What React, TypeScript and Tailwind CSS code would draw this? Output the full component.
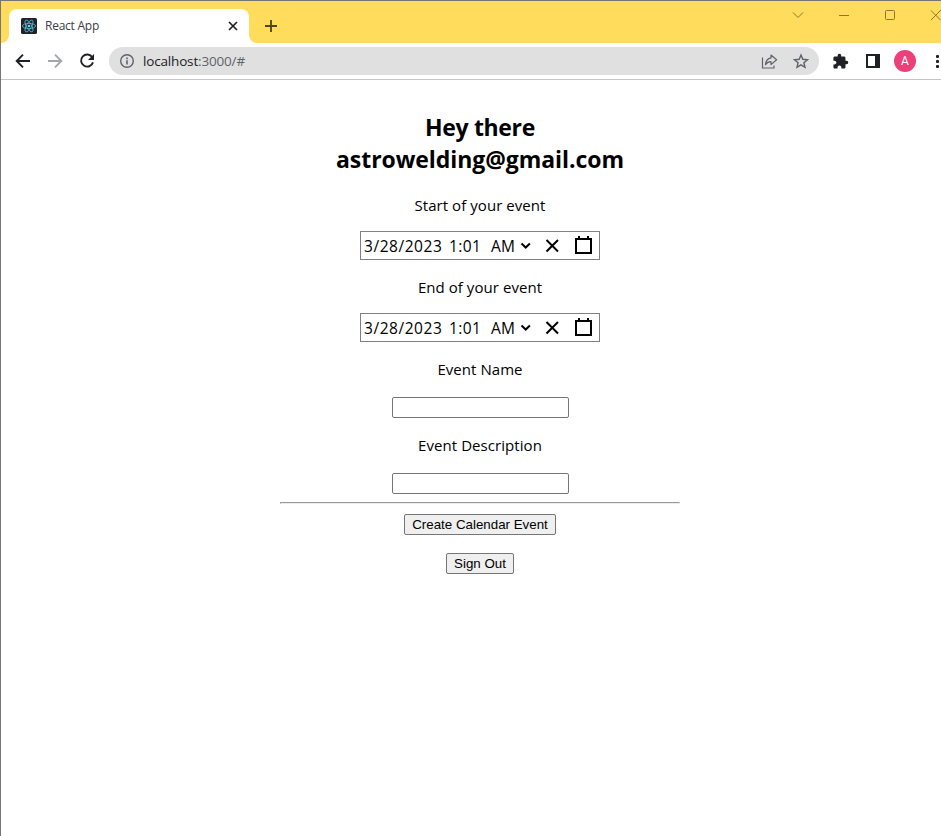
import React from 'react';

const uiFont = "font-['Open_Sans','Noto_Sans',sans-serif]";

function ReactLogo() {
  return (
    <svg className="size-4 shrink-0" viewBox="0 0 16 16">
      <rect width="16" height="16" rx="1.5" fill="#20232a" />
      <g fill="none" stroke="#53b6d0" strokeWidth="0.85">
        <ellipse cx="8" cy="8" rx="6.6" ry="2.6" />
        <ellipse cx="8" cy="8" rx="6.6" ry="2.6" transform="rotate(60 8 8)" />
        <ellipse cx="8" cy="8" rx="6.6" ry="2.6" transform="rotate(120 8 8)" />
      </g>
      <circle cx="8" cy="8" r="1.3" fill="#61dafb" />
    </svg>
  );
}

function TabStrip() {
  return (
    <div className="flex h-[42px] bg-[#ffdc5c]">
      <div className="flex w-2 items-end bg-[#ffdc5c]">
        <svg className="h-2 w-2" viewBox="0 0 8 8"><path d="M8 0v8H0a8 8 0 0 0 8-8z" fill="#fff" /></svg>
      </div>
      <div className="mt-2 flex h-[34px] w-60 items-center rounded-t-lg bg-white pl-3 pr-2.5">
        <ReactLogo />
        <span className={`${uiFont} ml-2 flex-1 text-[12px] leading-4 tracking-[-0.25px] text-[#3c4043]`}>React App</span>
        <svg className="h-3 w-3" viewBox="0 0 12 12"><path d="M2 2l8 8M10 2l-8 8" stroke="#202124" strokeWidth="1.7" /></svg>
      </div>
      <div className="flex w-2 items-end">
        <svg className="h-2 w-2" viewBox="0 0 8 8"><path d="M0 0v8h8a8 8 0 0 1-8-8z" fill="#fff" /></svg>
      </div>
      <svg className="ml-2 mt-[19px] h-3 w-3" viewBox="0 0 12 12"><path d="M6 0v12M0 6h12" stroke="#4d431f" strokeWidth="1.8" /></svg>
      <div className="flex-1" />
      <svg className="h-7 w-[150px]" viewBox="791 1 150 28" fill="none" stroke="#8a7732">
        <path d="M793 12.5l5 5 5-5" />
        <path d="M839 15.5h10" />
        <rect x="885.5" y="10.5" width="9" height="9" rx="1" />
        <path d="M931 10.5l10 10M931 20l10-10" />
      </svg>
    </div>
  );
}

function Toolbar() {
  return (
    <div className="flex h-[37px] items-center border-b border-[#c6c6c6] bg-white">
      <svg className="h-9 w-[108px] shrink-0" viewBox="1 43 108 36" fill="none" strokeWidth="1.9">
        <path d="M30 61H17M23 54.7L16.7 61l6.3 6.3" stroke="#202124" />
        <path d="M48 61h13M55 54.7l6.3 6.3-6.3 6.3" stroke="#a5a6a8" />
        <path d="M92.3 57.2A6.1 6.1 0 1 0 93 62.4" stroke="#202124" />
        <path d="M94 54v6h-6z" fill="#202124" />
      </svg>
      <div className="flex h-7 w-[710px] shrink-0 items-center rounded-full bg-[#e0e0e0] pl-[11px]">
        <svg className="h-[14px] w-[14px]" viewBox="0 0 14 14" fill="none" stroke="#5f6368">
          <circle cx="7" cy="7" r="6.3" strokeWidth="1.4" />
          <path d="M7 6.2v4.2M7 3.6v1.6" strokeWidth="1.6" />
        </svg>
        <span className={`${uiFont} ml-[9px] flex-1 text-[13.5px] leading-5 tracking-[-0.17px] text-[#5f6368]`}>
          <span className="text-[#202124]">localhost</span>:3000/#
        </span>
        <svg className="h-7 w-[60px]" viewBox="759 47 60 28" fill="none" stroke="#5f6368" strokeWidth="1.2">
          <path d="M762.5 57.5v10.500h11.500v-2.5" />
          <path d="M771 55l5.6 4.8-5.6 4.8v-2.9c-2.5 0-4.2.9-5.5 3 .3-3.8 2.1-6.2 5.5-6.8z" strokeLinejoin="round" />
          <path d="M801 55l1.8 4.3 4.7.4-3.6 3 1.1 4.6-4-2.5-4 2.5 1.1-4.6-3.6-3 4.7-.4z" strokeWidth="1.4" />
        </svg>
      </div>
      <svg className="ml-[13px] size-[17px] shrink-0" viewBox="0 0 24 24" fill="#202124">
        <path d="M20.5 11H19V7c0-1.1-.9-2-2-2h-4V3.5a2.5 2.5 0 0 0-5 0V5H4c-1.1 0-2 .9-2 2v3.8h1.5c1.5 0 2.7 1.2 2.7 2.7S5 16.2 3.5 16.2H2V20c0 1.1.9 2 2 2h3.8v-1.5c0-1.5 1.2-2.7 2.7-2.7s2.7 1.2 2.7 2.7V22H17c1.1 0 2-.9 2-2v-4h1.5a2.5 2.5 0 0 0 0-5z" />
      </svg>
      <div className="ml-[17px] h-[14px] w-[14px] shrink-0 border-2 border-r-[5px] border-[#202124]" />
      <div className="ml-[14px] flex size-[22px] shrink-0 items-center justify-center rounded-full bg-[#ec407a] font-[Roboto,sans-serif] text-[12px] text-white">A</div>
      <svg className="ml-[18px] h-4 w-[6px] shrink-0" viewBox="0 0 6 16" fill="#202124">
        <rect x="2" y="2" width="3" height="3" rx="1" /><rect x="2" y="7" width="3" height="3" rx="1" /><rect x="2" y="12" width="3" height="3" rx="1" />
      </svg>
    </div>
  );
}

function Label({ children }: { children: React.ReactNode }) {
  return <p className="h-[22px] whitespace-nowrap text-[15px] leading-[22px] tracking-[0.06px]">{children}</p>;
}

function DateTimePicker() {
  return (
    <div className="flex h-[29px] w-60 items-center border border-[#808080] pl-[3px] text-[15.5px]">
      <span className="w-[85px] whitespace-nowrap pt-0.5 leading-[21px] tracking-[0.55px]">3/28/2023</span>
      <span className="w-[42px] whitespace-nowrap pt-0.5 leading-[21px] tracking-[0.4px]">1:01</span>
      <span className="w-[29px] whitespace-nowrap pt-0.5 leading-[21px] tracking-[0.3px]">AM</span>
      <svg className="h-[27px] w-[76px]" viewBox="520 232 76 27" fill="none" stroke="#000">
        <path d="M521.5 243.5l4.2 4 4.2-4" strokeWidth="2" />
        <path d="M546.5 240l11.5 11.5M558 240l-11.5 11.5" strokeWidth="2" />
        <path d="M576 239h15v14h-15zM579 236v4M588 236v4" strokeWidth="2" />
      </svg>
    </div>
  );
}

function Field() {
  return <input className="h-[21px] w-[177px] rounded-[2px] border border-[#767676] bg-white px-1 outline-none" />;
}

function Button({ children, className }: { children: React.ReactNode; className: string }) {
  return (
    <button className={`${className} h-[21px] whitespace-nowrap rounded-[2px] border border-[#767676] bg-[#efefef] font-['Liberation_Sans',Arial,sans-serif] text-[13.333px] leading-[19px]`}>
      {children}
    </button>
  );
}

export default function App() {
  return (
    <div className="h-[836px] w-[941px] overflow-hidden border-l border-t border-[#757575] bg-white">
      <TabStrip />
      <Toolbar />
      <main className={`${uiFont} ml-[279px] flex w-[400px] flex-col items-center pt-[31px] text-black`}>
        <h2 className="text-center text-[23px] font-bold leading-8 tracking-[-0.06px]">
          <span className="tracking-[-0.35px]">Hey there</span><br />astrowelding@gmail.com
        </h2>
        <div className="mt-[19px]"><Label>Start of your event</Label></div>
        <div className="mt-[15px]"><DateTimePicker /></div>
        <div className="mt-4"><Label>End of your event</Label></div>
        <div className="mt-[15px]"><DateTimePicker /></div>
        <div className="mt-4"><Label>Event Name</Label></div>
        <div className="ml-px mt-[17px] flex"><Field /></div>
        <div className="mt-4"><Label>Event Description</Label></div>
        <div className="ml-px mt-[17px] flex"><Field /></div>
        <hr className="mt-2 h-[2px] w-[400px] border border-b-[#ececec] border-t-[#9a9a9a] border-l-[#9a9a9a] border-r-[#ececec]" />
        <Button className="mt-[10px] w-[152px]">Create Calendar Event</Button>
        <Button className="mt-[18px] w-[68px]">Sign Out</Button>
      </main>
    </div>
  );
}
